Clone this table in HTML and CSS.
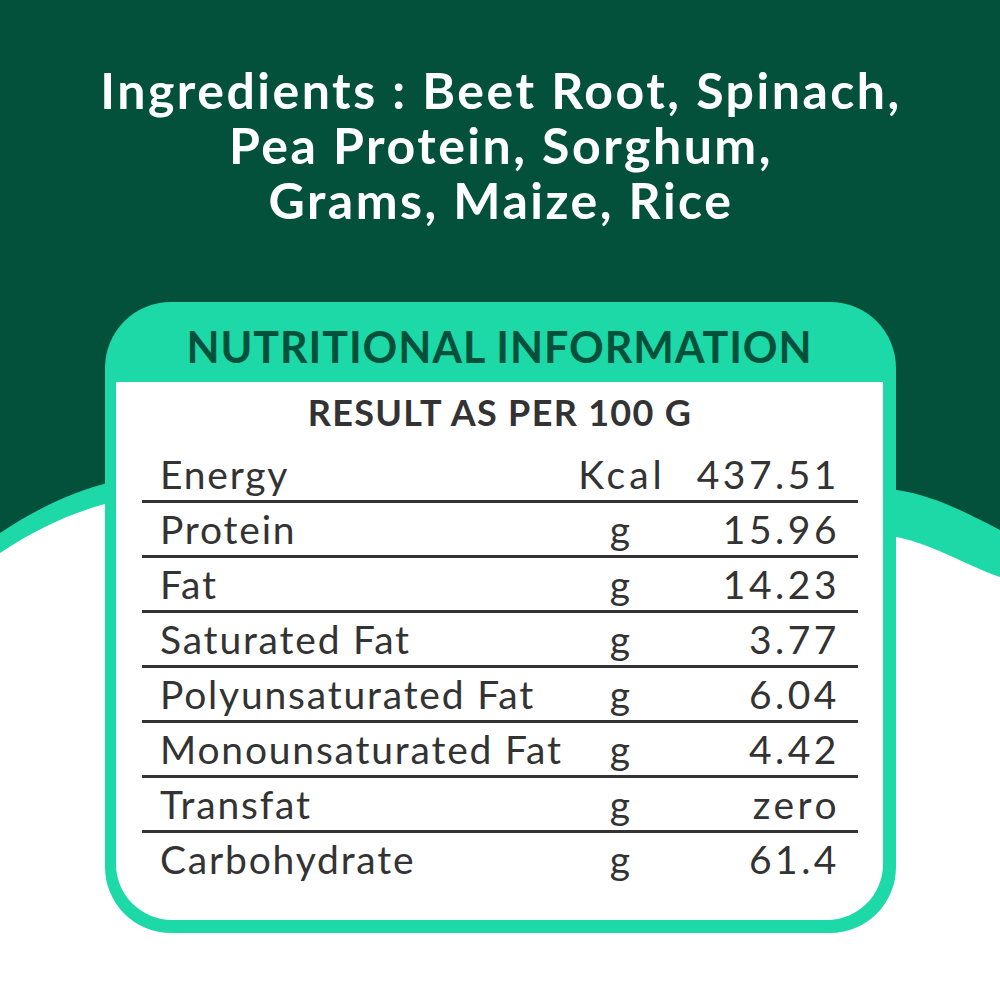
FILE: index.html
```html
<!DOCTYPE html>
<html lang="en">
<head>
<meta charset="utf-8">
<title>Nutritional Information</title>
<link rel="stylesheet" href="styles.css">
</head>
<body>
<div class="page">
  <svg class="backdrop" width="1000" height="600" viewBox="0 0 1000 600" aria-hidden="true">
    <path class="wave-teal" d="M0,0 H1000 V577 C965,565 935,545 897,537 L120,500 C70,512 35,530 0,553 Z"/>
    <path class="wave-dark" d="M0,0 H1000 V530 C965,512 935,496 897,490 L115,481 C70,492 35,510 0,533 Z"/>
  </svg>

  <h1 class="ingredients">Ingredients : Beet Root, Spinach,<br>Pea Protein, Sorghum,<br>Grams, Maize, Rice</h1>

  <section class="card">
    <h2 class="card-title">NUTRITIONAL INFORMATION</h2>
    <div class="card-body">
      <p class="basis">RESULT AS PER 100 G</p>
      <div class="table">
        <div class="row"><span class="label">Energy</span><span class="unit">Kcal</span><span class="value">437.51</span></div>
        <div class="row"><span class="label">Protein</span><span class="unit">g</span><span class="value">15.96</span></div>
        <div class="row"><span class="label">Fat</span><span class="unit">g</span><span class="value">14.23</span></div>
        <div class="row"><span class="label">Saturated Fat</span><span class="unit">g</span><span class="value">3.77</span></div>
        <div class="row"><span class="label">Polyunsaturated Fat</span><span class="unit">g</span><span class="value">6.04</span></div>
        <div class="row"><span class="label">Monounsaturated Fat</span><span class="unit">g</span><span class="value">4.42</span></div>
        <div class="row"><span class="label">Transfat</span><span class="unit">g</span><span class="value">zero</span></div>
        <div class="row last"><span class="label">Carbohydrate</span><span class="unit">g</span><span class="value">61.4</span></div>
      </div>
    </div>
  </section>
</div>
</body>
</html>
```

FILE: styles.css
```css
* { box-sizing: border-box; }

html, body {
  margin: 0;
  padding: 0;
  background: #ffffff;
}

body {
  font-family: "Lato", "Liberation Sans", sans-serif;
}

.page {
  position: relative;
  width: 1000px;
  height: 1000px;
  overflow: hidden;
  background: #ffffff;
}

.backdrop {
  position: absolute;
  left: 0;
  top: 0;
  z-index: 0;
}

.wave-teal { fill: #1dd8a7; }
.wave-dark { fill: #03513a; }

.ingredients {
  position: relative;
  z-index: 1;
  margin: 0;
  padding-top: 63px;
  padding-left: 2px;
  height: 302px;
  text-align: center;
  color: #ffffff;
  font-size: 50px;
  line-height: 55px;
  font-weight: 700;
  letter-spacing: 2.5px;
}

.card {
  position: relative;
  z-index: 1;
  margin-left: 105px;
  width: 791px;
  height: 631px;
  background: #1dd8a7;
  border-radius: 66px;
  padding: 0 13px 13px 11px;
  display: flex;
  flex-direction: column;
}

.card-title {
  margin: 0;
  padding-top: 9px;
  height: 80px;
  line-height: 71px;
  text-align: center;
  font-size: 43px;
  font-weight: 700;
  color: #03513a;
  letter-spacing: 0.9px;
}

.card-body {
  flex: 1;
  background: #ffffff;
  border-radius: 0 0 56px 56px;
  padding: 8px 25px 0 26px;
}

.basis {
  margin: 0 0 14px;
  line-height: 44px;
  text-align: center;
  font-size: 36px;
  font-weight: 700;
  color: #333333;
  letter-spacing: 1.3px;
}

.table {
  display: flex;
  flex-direction: column;
}

.row {
  display: grid;
  grid-template-columns: 1fr 84px 196px;
  height: 55px;
  border-bottom: 3px solid #333333;
  font-size: 39px;
  line-height: 52px;
  color: #333333;
  font-weight: 400;
}

.row.last { border-bottom: none; }

.label {
  padding-left: 18px;
  white-space: nowrap;
  letter-spacing: 1.8px;
}

.unit {
  justify-self: center;
  white-space: nowrap;
  letter-spacing: 4px;
  margin-right: -4px;
}

.value {
  text-align: right;
  padding-right: 18px;
  letter-spacing: 3.5px;
}
```
